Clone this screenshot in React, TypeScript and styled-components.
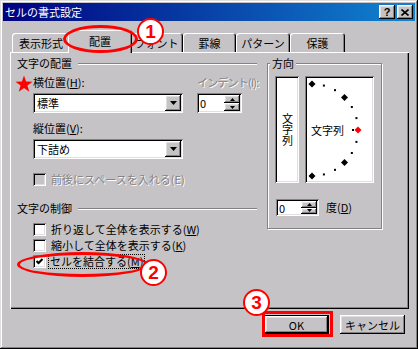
import React from 'react';
import styled, { createGlobalStyle } from 'styled-components';

const FACE = '#c6c3c6';
const SHADOW = '#848284';
const DARK = '#000';
const LIGHT = '#fff';
const LIGHT2 = '#dedfde';
const MARK = '#ff0000';

const raised = `box-shadow: inset -1px -1px ${DARK}, inset 1px 1px ${LIGHT}, inset -2px -2px ${SHADOW}, inset 2px 2px ${LIGHT2};`;
const sunken = `box-shadow: inset 1px 1px ${SHADOW}, inset -1px -1px ${LIGHT}, inset 2px 2px ${DARK}, inset -2px -2px ${LIGHT2};`;

const GlobalStyle = createGlobalStyle`
  html, body {
    margin: 0;
    padding: 0;
    background: ${FACE};
  }
  body {
    font-family: "Noto Sans CJK JP", "Noto Sans", sans-serif;
    font-size: 11px;
    color: #000;
  }
`;

const Dialog = styled.div`
  position: relative;
  width: 418px;
  height: 349px;
  box-sizing: border-box;
  padding: 3px;
  background: ${FACE};
  box-shadow: inset -1px -1px ${DARK}, inset 1px 1px ${LIGHT2}, inset -2px -2px ${SHADOW}, inset 2px 2px ${LIGHT};
  display: flex;
  flex-direction: column;
`;

const TitleBar = styled.div`
  height: 18px;
  display: flex;
  align-items: center;
  padding: 0 2px;
  background: linear-gradient(to right, #000080, #1084d0);
`;

const TitleText = styled.span`
  color: #fff;
  line-height: 18px;
`;

const TitleButtons = styled.div`
  margin-left: auto;
  display: flex;
  gap: 2px;
`;

const TitleButton = styled.div`
  width: 16px;
  height: 14px;
  box-sizing: border-box;
  background: ${FACE};
  ${raised}
  display: flex;
  align-items: center;
  justify-content: center;
  font-family: "Liberation Sans", Arial, sans-serif;
  font-weight: bold;
  font-size: 11px;
  line-height: 14px;
`;

const TabStrip = styled.div`
  position: relative;
  z-index: 1;
  margin-top: 9px;
  height: 22px;
  padding-left: 9px;
  display: flex;
  align-items: flex-end;
`;

const Tab = styled.div<{ $w: number; $active?: boolean }>`
  position: relative;
  width: ${({ $w }) => $w}px;
  height: ${({ $active }) => ($active ? 23 : 19)}px;
  margin: ${({ $active }) => ($active ? '0 -2px -1px' : '0')};
  z-index: ${({ $active }) => ($active ? 2 : 1)};
  box-sizing: border-box;
  background: ${FACE};
  border-radius: 3px 3px 0 0;
  box-shadow: inset 1px 1px ${LIGHT}, inset -1px 0 ${DARK}, inset -2px 0 ${SHADOW};
  display: flex;
  align-items: center;
  justify-content: center;
  padding-bottom: ${({ $active }) => ($active ? 2 : 0)}px;
`;

const Panel = styled.div`
  margin-left: 7px;
  width: 399px;
  height: 257px;
  box-sizing: border-box;
  padding: 5px 0 0 7px;
  box-shadow: inset 1px 1px ${LIGHT}, inset -1px -1px ${DARK}, inset -2px -2px ${SHADOW};
  display: flex;
  gap: 10px;
`;

const LeftCol = styled.div`
  width: 240px;
  display: flex;
  flex-direction: column;
`;

const Heading = styled.div<{ $top?: number }>`
  height: 13px;
  line-height: 13px;
  margin-top: ${({ $top }) => $top ?? 0}px;
  display: flex;
  align-items: center;
  gap: 6px;

  &::after {
    content: '';
    flex: 1;
    border-top: 1px solid ${SHADOW};
    border-bottom: 1px solid ${LIGHT};
  }
`;

const Caption = styled.div<{ $disabled?: boolean; $tight?: boolean; $top?: number; $indent?: number }>`
  height: 13px;
  line-height: 13px;
  white-space: nowrap;
  letter-spacing: ${({ $tight }) => ($tight ? '-0.8px' : 'normal')};
  margin-top: ${({ $top }) => $top ?? 0}px;
  margin-left: ${({ $indent }) => $indent ?? 0}px;
  color: ${({ $disabled }) => ($disabled ? SHADOW : '#000')};
  text-shadow: ${({ $disabled }) => ($disabled ? `1px 1px 0 ${LIGHT}` : 'none')};
`;

const FieldGrid = styled.div`
  display: grid;
  grid-template-columns: 150px 45px;
  column-gap: 14px;
  row-gap: 4px;
  margin: 6px 0 0 16px;
`;

const Combo = styled.div<{ $top?: number; $indent?: number }>`
  width: 150px;
  height: 20px;
  box-sizing: border-box;
  margin-top: ${({ $top }) => $top ?? 0}px;
  margin-left: ${({ $indent }) => $indent ?? 0}px;
  background: #fff;
  ${sunken}
  display: flex;
  align-items: center;
  padding: 0 2px 0 4px;
`;

const ComboButton = styled.div`
  margin-left: auto;
  width: 16px;
  height: 16px;
  box-sizing: border-box;
  background: ${FACE};
  ${raised}
  display: flex;
  align-items: center;
  justify-content: center;
`;

const Spinner = styled.div<{ $w: number; $h: number }>`
  width: ${({ $w }) => $w}px;
  height: ${({ $h }) => $h}px;
  box-sizing: border-box;
  background: #fff;
  ${sunken}
  display: flex;
  padding: 2px;
`;

const SpinValue = styled.div`
  flex: 1;
  padding-left: 1px;
  display: flex;
  align-items: center;
`;

const SpinButtons = styled.div`
  width: 16px;
  display: flex;
  flex-direction: column;
`;

const SpinButton = styled.div`
  flex: 1;
  background: ${FACE};
  ${raised}
  display: flex;
  align-items: center;
  justify-content: center;
`;

const CheckRow = styled.div<{ $h: number; $top?: number }>`
  height: ${({ $h }) => $h}px;
  margin: ${({ $top }) => $top ?? 0}px 0 0 16px;
  display: flex;
  align-items: center;
  gap: 4px;
  white-space: nowrap;
`;

const CheckBox = styled.div<{ $disabled?: boolean }>`
  width: 13px;
  height: 13px;
  box-sizing: border-box;
  background: ${({ $disabled }) => ($disabled ? FACE : '#fff')};
  ${sunken}
  display: flex;
  align-items: center;
  justify-content: center;
`;

const CheckLabel = styled.span<{ $disabled?: boolean; $focus?: boolean }>`
  line-height: 13px;
  padding: 0 1px;
  margin-left: ${({ $focus }) => ($focus ? -2 : 0)}px;
  border: ${({ $focus }) => ($focus ? `1px dotted ${DARK}` : 'none')};
  color: ${({ $disabled }) => ($disabled ? SHADOW : '#000')};
  text-shadow: ${({ $disabled }) => ($disabled ? `1px 1px 0 ${LIGHT}` : 'none')};
`;

const Group = styled.fieldset`
  margin: 0;
  width: 115px;
  box-sizing: border-box;
  padding: 6px 0 12px 7px;
  border: 1px solid ${SHADOW};
  box-shadow: 1px 1px 0 ${LIGHT}, inset 1px 1px 0 ${LIGHT};
  align-self: flex-start;
`;

const GroupLegend = styled.legend`
  padding: 0 2px;
  margin-left: -5px;
  line-height: 13px;
  background: ${FACE};
`;

const DialRow = styled.div`
  display: flex;
  gap: 6px;
`;

const TextBox = styled.div`
  width: 24px;
  height: 107px;
  box-sizing: border-box;
  background: #fff;
  ${sunken}
  display: flex;
  align-items: center;
  justify-content: center;
`;

const VerticalText = styled.span`
  writing-mode: vertical-rl;
  text-orientation: upright;
  line-height: 11px;
`;

const DialBox = styled.div`
  width: 69px;
  height: 107px;
  box-sizing: border-box;
  background: #fff;
  ${sunken}

  svg {
    display: block;
  }
`;

const DegreeRow = styled.div`
  margin: 16px 0 0 1px;
  display: flex;
  align-items: center;
  gap: 7px;
`;

const ButtonBar = styled.div`
  margin-top: 6px;
  padding-right: 10px;
  display: flex;
  justify-content: flex-end;
  gap: 11px;
`;

const Button = styled.div<{ $default?: boolean }>`
  width: 65px;
  height: 19px;
  box-sizing: border-box;
  background: ${FACE};
  border: ${({ $default }) => ($default ? `1px solid ${DARK}` : 'none')};
  ${raised}
  display: flex;
  align-items: center;
  justify-content: center;
`;

const Ring = styled.div<{ $x: number; $y: number; $w: number; $h: number; $square?: boolean }>`
  position: absolute;
  left: ${({ $x }) => $x}px;
  top: ${({ $y }) => $y}px;
  width: ${({ $w }) => $w}px;
  height: ${({ $h }) => $h}px;
  box-sizing: border-box;
  border: 3px solid ${MARK};
  border-radius: ${({ $square }) => ($square ? '0' : '50%')};
  pointer-events: none;
  z-index: 5;
`;

const Badge = styled.div<{ $x: number; $y: number }>`
  position: absolute;
  left: ${({ $x }) => $x}px;
  top: ${({ $y }) => $y}px;
  width: 27px;
  height: 27px;
  box-sizing: border-box;
  border: 2px solid ${MARK};
  border-radius: 50%;
  background: #fff;
  color: ${MARK};
  font-family: "Liberation Sans", Arial, sans-serif;
  font-size: 19px;
  font-weight: bold;
  display: flex;
  align-items: center;
  justify-content: center;
  z-index: 6;
`;

const Star = styled.svg`
  position: absolute;
  left: 15px;
  top: 75px;
  z-index: 6;
`;

const Arrow = () => (
  <svg width="7" height="4" viewBox="0 0 7 4">
    <polygon points="0,0 7,0 3.5,4" fill="#000" />
  </svg>
);

const SmallArrow = ({ up }: { up?: boolean }) => (
  <svg width="5" height="3" viewBox="0 0 5 3">
    <polygon points={up ? '0,3 5,3 2.5,0' : '0,0 5,0 2.5,3'} fill="#000" />
  </svg>
);

const Check = () => (
  <svg width="7" height="7" viewBox="0 0 7 7">
    <polyline points="0.5,3 2.5,5 6.5,1" fill="none" stroke="#000" strokeWidth="2" />
  </svg>
);

const Spin = ({ w, h }: { w: number; h: number }) => (
  <Spinner $w={w} $h={h}>
    <SpinValue>0</SpinValue>
    <SpinButtons>
      <SpinButton><SmallArrow up /></SpinButton>
      <SpinButton><SmallArrow /></SpinButton>
    </SpinButtons>
  </Spinner>
);

// orientation dial: centre (7,54), radius 46, marks every 15 degrees
const Dial = () => {
  const marks = [];
  for (let a = 90; a >= -90; a -= 15) {
    const r = (a * Math.PI) / 180;
    const x = 7 + 46 * Math.cos(r);
    const y = 54 - 46 * Math.sin(r);
    if (a % 45 === 0) {
      marks.push(
        <polygon
          key={a}
          points={`${x},${y - 3.5} ${x + 3.5},${y} ${x},${y + 3.5} ${x - 3.5},${y}`}
          fill={a === 0 ? MARK : '#000'}
        />
      );
    } else {
      marks.push(<rect key={a} x={x - 1} y={y - 1} width="2" height="2" fill="#000" />);
    }
  }
  return (
    <svg width="69" height="107" viewBox="0 0 69 107">
      {marks}
      <rect x="47" y="53" width="2" height="2" fill="#000" />
      <text x="6" y="58.5" fontSize="11" fontFamily='"Noto Sans CJK JP", sans-serif' fill="#000">文字列</text>
    </svg>
  );
};

export default function App() {
  return (
    <>
      <GlobalStyle />
      <Dialog>
        <TitleBar>
          <TitleText>セルの書式設定</TitleText>
          <TitleButtons>
            <TitleButton>?</TitleButton>
            <TitleButton>
              <svg width="8" height="7" viewBox="0 0 8 7">
                <path d="M0.5 0.5 L7.5 6.5 M7.5 0.5 L0.5 6.5" stroke="#000" strokeWidth="1.6" />
              </svg>
            </TitleButton>
          </TitleButtons>
        </TitleBar>

        <TabStrip>
          <Tab $w={58}>表示形式</Tab>
          <Tab $w={64} $active>配置</Tab>
          <Tab $w={53}>フォント</Tab>
          <Tab $w={53}>罫線</Tab>
          <Tab $w={54}>パターン</Tab>
          <Tab $w={55}>保護</Tab>
        </TabStrip>

        <Panel>
          <LeftCol>
            <Heading>文字の配置</Heading>
            <FieldGrid>
              <Caption>横位置(<u>H</u>):</Caption>
              <Caption $disabled $tight>インデント(I):</Caption>
              <Combo>
                標準
                <ComboButton><Arrow /></ComboButton>
              </Combo>
              <Spin w={45} h={20} />
            </FieldGrid>
            <Caption $top={9} $indent={16}>縦位置(<u>V</u>):</Caption>
            <Combo $top={4} $indent={16}>
              下詰め
              <ComboButton><Arrow /></ComboButton>
            </Combo>
            <CheckRow $h={13} $top={14}>
              <CheckBox $disabled />
              <CheckLabel $disabled>前後にスペースを入れる(E)</CheckLabel>
            </CheckRow>

            <Heading $top={16}>文字の制御</Heading>
            <CheckRow $h={16} $top={6}>
              <CheckBox />
              <CheckLabel>折り返して全体を表示する(<u>W</u>)</CheckLabel>
            </CheckRow>
            <CheckRow $h={16}>
              <CheckBox />
              <CheckLabel>縮小して全体を表示する(<u>K</u>)</CheckLabel>
            </CheckRow>
            <CheckRow $h={16}>
              <CheckBox><Check /></CheckBox>
              <CheckLabel $focus>セルを結合する(<u>M</u>)</CheckLabel>
            </CheckRow>
          </LeftCol>

          <Group>
            <GroupLegend>方向</GroupLegend>
            <DialRow>
              <TextBox>
                <VerticalText>文字列</VerticalText>
              </TextBox>
              <DialBox>
                <Dial />
              </DialBox>
            </DialRow>
            <DegreeRow>
              <Spin w={43} h={17} />
              <Caption>度(<u>D</u>)</Caption>
            </DegreeRow>
          </Group>
        </Panel>

        <ButtonBar>
          <Button $default>OK</Button>
          <Button>キャンセル</Button>
        </ButtonBar>

        <Ring $x={63} $y={25} $w={75} $h={28} />
        <Badge $x={137} $y={18}>1</Badge>
        <Star width="18" height="18" viewBox="0 0 18 18">
          <polygon
            points="9,0.5 11.1,6.6 17.6,6.7 12.4,10.6 14.3,16.8 9,13.1 3.7,16.8 5.6,10.6 0.4,6.7 6.9,6.6"
            fill={MARK}
          />
        </Star>
        <Ring $x={17} $y={252} $w={131} $h={25} />
        <Badge $x={140} $y={259}>2</Badge>
        <Badge $x={243} $y={289}>3</Badge>
        <Ring $x={262} $y={311} $w={71} $h={26} $square />
      </Dialog>
    </>
  );
}
